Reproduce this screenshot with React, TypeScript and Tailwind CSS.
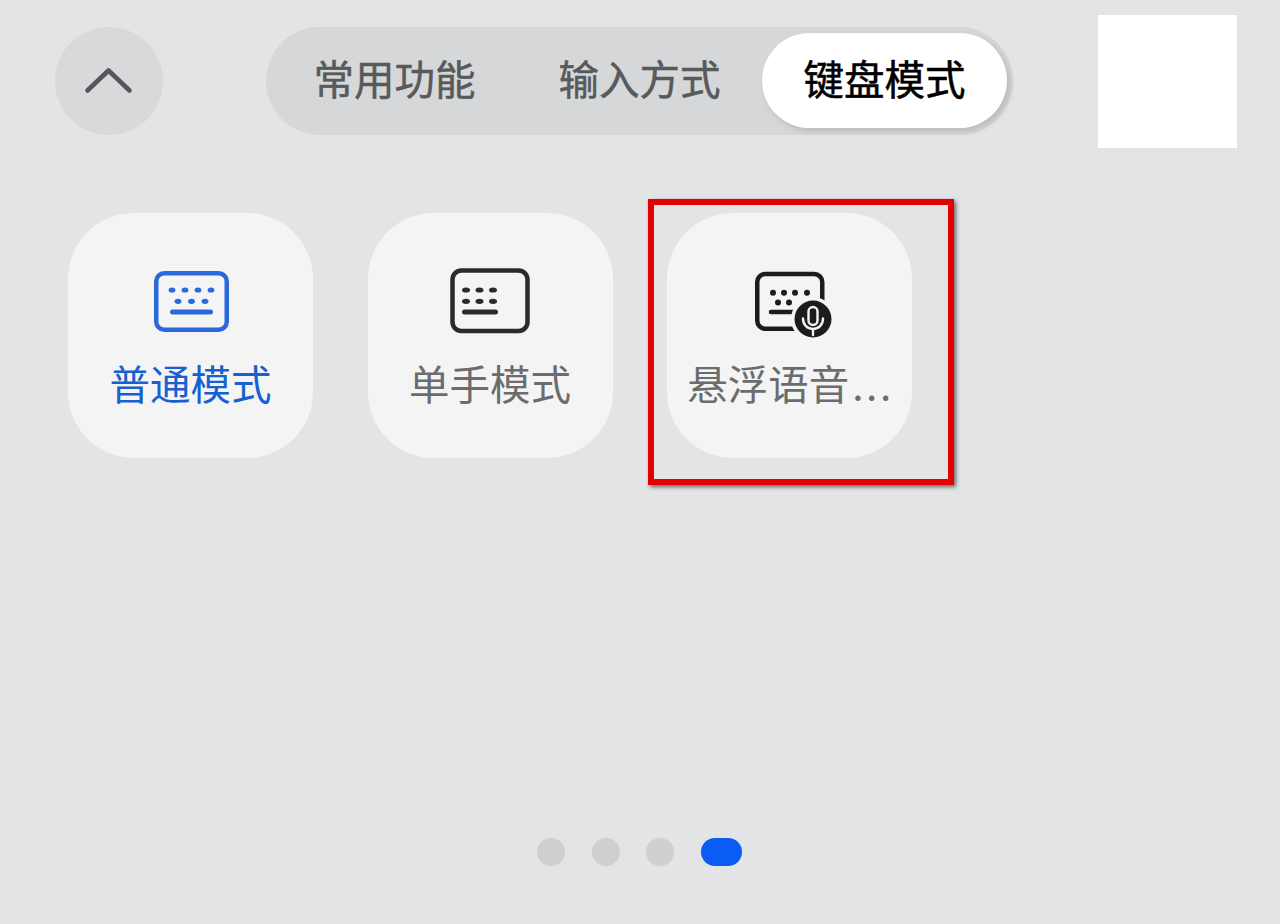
const fontStack = "font-['Noto_Sans_CJK_SC','Noto_Sans',sans-serif]";

function NormalIcon() {
  return (
    <svg width="80" height="70" viewBox="0 0 80 70" fill="none">
      <rect x="5.25" y="7.25" width="70.5" height="56.5" rx="8" stroke="#2b68dc" strokeWidth="4.5" />
      <g fill="#2b68dc">
        <ellipse cx="21" cy="24" rx="3.4" ry="2.6" />
        <ellipse cx="34" cy="24" rx="3.4" ry="2.6" />
        <ellipse cx="47" cy="24" rx="3.4" ry="2.6" />
        <ellipse cx="60" cy="24" rx="3.4" ry="2.6" />
        <ellipse cx="27" cy="35.3" rx="3.4" ry="2.6" />
        <ellipse cx="40.5" cy="35.3" rx="3.4" ry="2.6" />
        <ellipse cx="54" cy="35.3" rx="3.4" ry="2.6" />
      </g>
      <path d="M21.5 46H59.5" stroke="#2b68dc" strokeWidth="5" strokeLinecap="round" />
    </svg>
  );
}

function OneHandIcon() {
  return (
    <svg width="80" height="70" viewBox="0 0 80 70" fill="none">
      <rect x="2.5" y="4.5" width="75" height="60.5" rx="9" stroke="#2b2b2b" strokeWidth="4.5" />
      <g fill="#2b2b2b">
        <ellipse cx="16" cy="24" rx="4" ry="2.6" />
        <ellipse cx="29.5" cy="24" rx="4" ry="2.6" />
        <ellipse cx="43" cy="24" rx="4" ry="2.6" />
        <ellipse cx="16" cy="35.3" rx="4" ry="2.6" />
        <ellipse cx="29.5" cy="35.3" rx="4" ry="2.6" />
        <ellipse cx="43" cy="35.3" rx="4" ry="2.6" />
      </g>
      <path d="M14.5 46H45.5" stroke="#2b2b2b" strokeWidth="5" strokeLinecap="round" />
    </svg>
  );
}

function VoiceIcon() {
  return (
    <svg width="80" height="70" viewBox="0 0 80 70" fill="none" className="overflow-visible">
      <rect x="7.25" y="8" width="65" height="54.75" rx="8" stroke="#1c1c1c" strokeWidth="4.5" />
      <g fill="#1c1c1c">
        <circle cx="23" cy="26.7" r="3" />
        <circle cx="34" cy="26.7" r="3" />
        <circle cx="45" cy="26.7" r="3" />
        <circle cx="57" cy="26.7" r="3" />
        <circle cx="28" cy="36.5" r="3" />
        <circle cx="39" cy="36.5" r="3" />
      </g>
      <path d="M21 46H48" stroke="#1c1c1c" strokeWidth="4.5" strokeLinecap="round" />
      <circle cx="63" cy="53" r="22" fill="#f4f4f5" />
      <circle cx="63" cy="53" r="18.5" fill="#1c1c1c" />
      <rect x="58.5" y="41" width="9" height="18" rx="4.5" stroke="#f4f4f5" strokeWidth="2.4" />
      <path d="M53 52.5C53 59 57.5 63 63 63C68.5 63 73 59 73 52.5M63 63V69" stroke="#f4f4f5" strokeWidth="2.4" strokeLinecap="round" />
    </svg>
  );
}

function ModeCard({
  icon,
  children,
}: {
  icon: React.ReactNode;
  children: React.ReactNode;
}) {
  return (
    <div className="flex h-[245px] w-[245px] flex-col items-center rounded-[66px] bg-[#f4f4f5] pt-[53px]">
      {icon}
      {children}
    </div>
  );
}

export default function App() {
  return (
    <div className={`relative h-[924px] w-[1280px] overflow-hidden bg-[#e2e4e6] ${fontStack}`}>
      <div className="flex items-start pl-[55px] pt-[27px]">
        <button className="flex h-[108px] w-[108px] items-center justify-center rounded-full bg-[#d8d9db]">
          <svg width="56" height="36" viewBox="0 0 56 36" fill="none">
            <path d="M6.5 27.5L27.5 7.5L48.5 27.5" stroke="#555659" strokeWidth="4.6" strokeLinecap="round" strokeLinejoin="round" />
          </svg>
        </button>
        <div className="ml-[103px] flex h-[108px] rounded-full bg-[#d6d7d9] pl-[6px] pr-[6px] pt-[6px]">
          <div className="flex h-[95px] w-[245px] items-center justify-center pb-[4px] text-[40.5px] text-[#58595b] [-webkit-text-stroke:0.5px_#58595b]">常用功能</div>
          <div className="flex h-[95px] w-[245px] items-center justify-center pb-[4px] text-[40.5px] text-[#58595b] [-webkit-text-stroke:0.5px_#58595b]">输入方式</div>
          <div className="flex h-[95px] w-[245px] items-center justify-center rounded-full bg-white pb-[4px] text-[40.5px] text-black shadow-[3px_3px_6px_rgba(0,0,0,0.14)] [-webkit-text-stroke:0.5px_#000]">键盘模式</div>
        </div>
      </div>

      <div className="mt-[78px] flex gap-[54.5px] pl-[68px]">
        <ModeCard icon={<NormalIcon />}>
          <div className="mt-[22px] text-[40.5px] leading-[50px] text-[#1660cf]">普通模式</div>
        </ModeCard>
        <ModeCard icon={<OneHandIcon />}>
          <div className="mt-[22px] text-[40.5px] leading-[50px] text-[#6b6c6e]">单手模式</div>
        </ModeCard>
        <ModeCard icon={<VoiceIcon />}>
          <div className="mt-[22px] ml-[2px] whitespace-nowrap text-[40.5px] leading-[50px] text-[#6b6c6e]">
            悬浮语音<span className="ml-[3px] tracking-[2.5px]">...</span>
          </div>
        </ModeCard>
      </div>

      <div className="mt-[380px] flex items-center justify-center gap-[26.7px] pr-[1px]">
        <div className="h-[28px] w-[28px] rounded-full bg-[#cdcfd1]" />
        <div className="h-[28px] w-[28px] rounded-full bg-[#cdcfd1]" />
        <div className="h-[28px] w-[28px] rounded-full bg-[#cdcfd1]" />
        <div className="h-[28px] w-[41px] rounded-full bg-[#0a5cf5]" />
      </div>

      <div className="absolute left-[1098px] top-[15px] h-[133px] w-[139px] bg-white" />
      <div className="absolute left-[648px] top-[199px] h-[286px] w-[306px] border-[6px] border-[#e30000] shadow-[2px_2px_4px_rgba(0,0,0,0.55)]" />
    </div>
  );
}
